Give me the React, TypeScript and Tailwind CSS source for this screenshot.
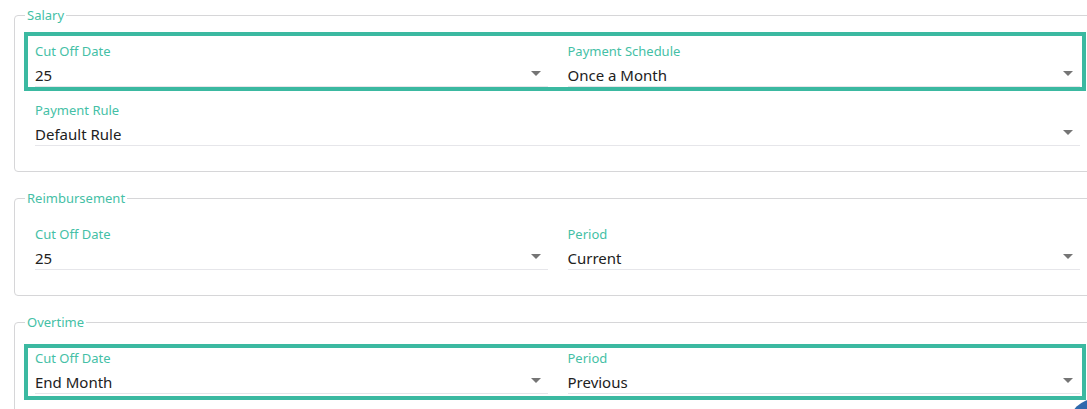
import React from 'react';

type Field = { label: string; value: string };

const Arrow = () => (
  <svg width="10" height="5" viewBox="0 0 10 5" className="shrink-0">
    <path d="M0 0 L10 0 L5 5 Z" fill="#757575" />
  </svg>
);

const SelectField: React.FC<Field> = ({ label, value }) => (
  <div className="flex-1 min-w-0">
    <div className="text-[13px] leading-[18px] text-[#45bfa6]">{label}</div>
    <div className="mt-[4px] flex items-center justify-between border-b border-[#e6e6ea] pr-[7px]">
      <span className="text-[15px] leading-[22px] text-[#212121]">{value}</span>
      <div className="-mt-[3px]">
        <Arrow />
      </div>
    </div>
  </div>
);

interface RowProps {
  fields: Field[];
  highlight?: boolean;
  className?: string;
}

const Row: React.FC<RowProps> = ({ fields, highlight, className = '' }) => (
  <div
    className={`ml-[9px] w-[1062px] border-[4px] pl-[7px] pr-[2px] flex gap-[20px] ${
      highlight ? 'border-[#3bb9a1]' : 'border-transparent'
    } ${className}`}
  >
    {fields.map((f, i) => (
      <SelectField key={i} {...f} />
    ))}
  </div>
);

const Section: React.FC<{ title: string; children: React.ReactNode; className?: string }> = ({
  title,
  children,
  className = '',
}) => (
  <fieldset className={`ml-[14px] w-[1100px] border border-[#d6d6d8] rounded-[4px] pb-[21px] ${className}`}>
    <legend className="ml-[10px] px-[2px] text-[13px] leading-[18px] text-[#45bfa6]">{title}</legend>
    {children}
  </fieldset>
);

export default function App() {
  return (
    <div
      className="relative w-[1087px] h-[409px] overflow-hidden bg-white pt-[6px]"
      style={{ fontFamily: '"Noto Sans", "Open Sans", sans-serif' }}
    >
      <Section title="Salary">
        <Row
          highlight
          className="mt-[8px] pt-[6px]"
          fields={[
            { label: 'Cut Off Date', value: '25' },
            { label: 'Payment Schedule', value: 'Once a Month' },
          ]}
        />
        <Row className="pt-[6px]" fields={[{ label: 'Payment Rule', value: 'Default Rule' }]} />
      </Section>

      <Section title="Reimbursement" className="mt-[17px]">
        <Row
          className="mt-[8px] pt-[6px]"
          fields={[
            { label: 'Cut Off Date', value: '25' },
            { label: 'Period', value: 'Current' },
          ]}
        />
      </Section>

      <Section title="Overtime" className="mt-[17px]">
        <Row
          highlight
          className="mt-[13px] pt-[1px] pb-[2px]"
          fields={[
            { label: 'Cut Off Date', value: 'End Month' },
            { label: 'Period', value: 'Previous' },
          ]}
        />
      </Section>

      <div className="absolute left-[1069px] top-[399px] w-[52px] h-[52px] rounded-full bg-[#2f69ad]" />
    </div>
  );
}
